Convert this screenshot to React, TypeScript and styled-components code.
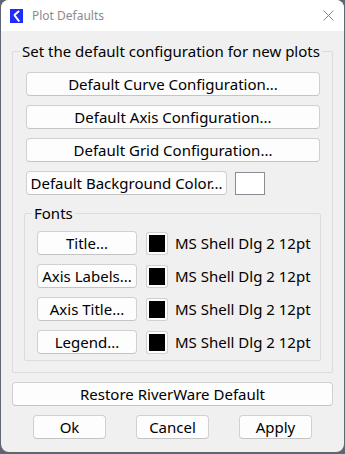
import styled, { createGlobalStyle } from 'styled-components';

const GlobalStyle = createGlobalStyle`
  html, body {
    margin: 0;
    padding: 0;
    background: #5f6672;
  }
  body {
    font-family: "Noto Sans", "DejaVu Sans", sans-serif;
  }
`;

const Window = styled.div`
  width: 343px;
  height: 452px;
  margin: 0 1px;
  background: #f0f0f0;
  border-radius: 8px;
  overflow: hidden;
  display: flex;
  flex-direction: column;
`;

const TitleBar = styled.div`
  height: 31px;
  background: #ffffff;
  display: flex;
  align-items: center;
  padding: 0 10px 0 9px;
  gap: 9px;
`;

const TitleText = styled.span`
  flex: 1;
  font-size: 12px;
  color: #8c8c8c;
`;

const Body = styled.div`
  display: flex;
  flex-direction: column;
  padding: 10px 11px 12px 11px;
`;

const Group = styled.fieldset<{ $inset?: boolean }>`
  margin: ${(p) => (p.$inset ? '-1px -1px 0 -2px' : '0')};
  border: 1px solid #dcdcdc;
  border-radius: 2px;
  padding: 0;
  min-width: 0;
`;

const Legend = styled.legend<{ $offset: number }>`
  font-size: 15px;
  line-height: 20px;
  padding: 0 2px;
  margin-left: ${(p) => p.$offset}px;
  color: #000;
  white-space: nowrap;
`;

const Stack = styled.div<{ $pad: string }>`
  display: flex;
  flex-direction: column;
  gap: 9px;
  padding: ${(p) => p.$pad};
`;

const Button = styled.button<{ $width?: number }>`
  height: 24px;
  width: ${(p) => (p.$width ? `${p.$width}px` : '100%')};
  flex-shrink: 0;
  background: #fdfdfd;
  border: 1px solid #d0d0d0;
  border-bottom-color: #c4c4c4;
  border-radius: 4px;
  font-family: "Noto Sans", "DejaVu Sans", sans-serif;
  font-size: 15px;
  color: #000;
  padding: 0;
  line-height: 20px;
  white-space: nowrap;
`;

const Row = styled.div`
  display: flex;
  align-items: center;
`;

const ColorBox = styled.div`
  width: 28px;
  height: 21px;
  margin-left: 8px;
  background: #ffffff;
  border: 1px solid #8a8d93;
`;

const Swatch = styled.div`
  width: 16px;
  height: 17px;
  margin-left: 10px;
  background: #000;
  border: 2px solid #fdfdfd;
  box-shadow: 0 0 0 1px #d0d0d0;
  border-radius: 2px;
`;

const FontName = styled.span`
  margin-left: 8px;
  font-size: 15px;
  color: #000;
  white-space: nowrap;
`;

const Footer = styled.div`
  display: flex;
  justify-content: center;
  gap: 30px;
  margin-top: 9px;
`;

const AppIcon = () => (
  <svg width="13" height="14" viewBox="0 0 13 14">
    <rect x="0" y="0" width="13" height="14" fill="#1f2bff" />
    <path d="M8.5 2.5 L5 5.5 Q4.2 6.3 5.2 7.2 L8.8 11.8" stroke="#ffffff" strokeWidth="2" fill="none" strokeLinecap="round" />
  </svg>
);

const CloseIcon = () => (
  <svg width="11" height="11" viewBox="0 0 11 11">
    <path d="M0.5 0.5 L10.5 10.5 M10.5 0.5 L0.5 10.5" stroke="#8a8a8a" strokeWidth="1" />
  </svg>
);

const fontRows = ['Title...', 'Axis Labels...', 'Axis Title...', 'Legend...'];

export default function App() {
  return (
    <>
      <GlobalStyle />
      <Window>
        <TitleBar>
          <AppIcon />
          <TitleText>Plot Defaults</TitleText>
          <CloseIcon />
        </TitleBar>
        <Body>
          <Group>
            <Legend $offset={7}>Set the default configuration for new plots</Legend>
            <Stack $pad="11px 12px 11px 13px">
              <Button>Default Curve Configuration...</Button>
              <Button>Default Axis Configuration...</Button>
              <Button>Default Grid Configuration...</Button>
              <Row>
                <Button $width={201}>Default Background Color...</Button>
                <ColorBox />
              </Row>
              <Group $inset>
                <Legend $offset={7}>Fonts</Legend>
                <Stack $pad="8px 5px 6px 12px">
                  {fontRows.map((label) => (
                    <Row key={label}>
                      <Button $width={100}>{label}</Button>
                      <Swatch />
                      <FontName>MS Shell Dlg 2 12pt</FontName>
                    </Row>
                  ))}
                </Stack>
              </Group>
            </Stack>
          </Group>
          <Button style={{ marginTop: 9 }}>Restore RiverWare Default</Button>
          <Footer>
            <Button $width={73}>Ok</Button>
            <Button $width={73}>Cancel</Button>
            <Button $width={73}>Apply</Button>
          </Footer>
        </Body>
      </Window>
    </>
  );
}
